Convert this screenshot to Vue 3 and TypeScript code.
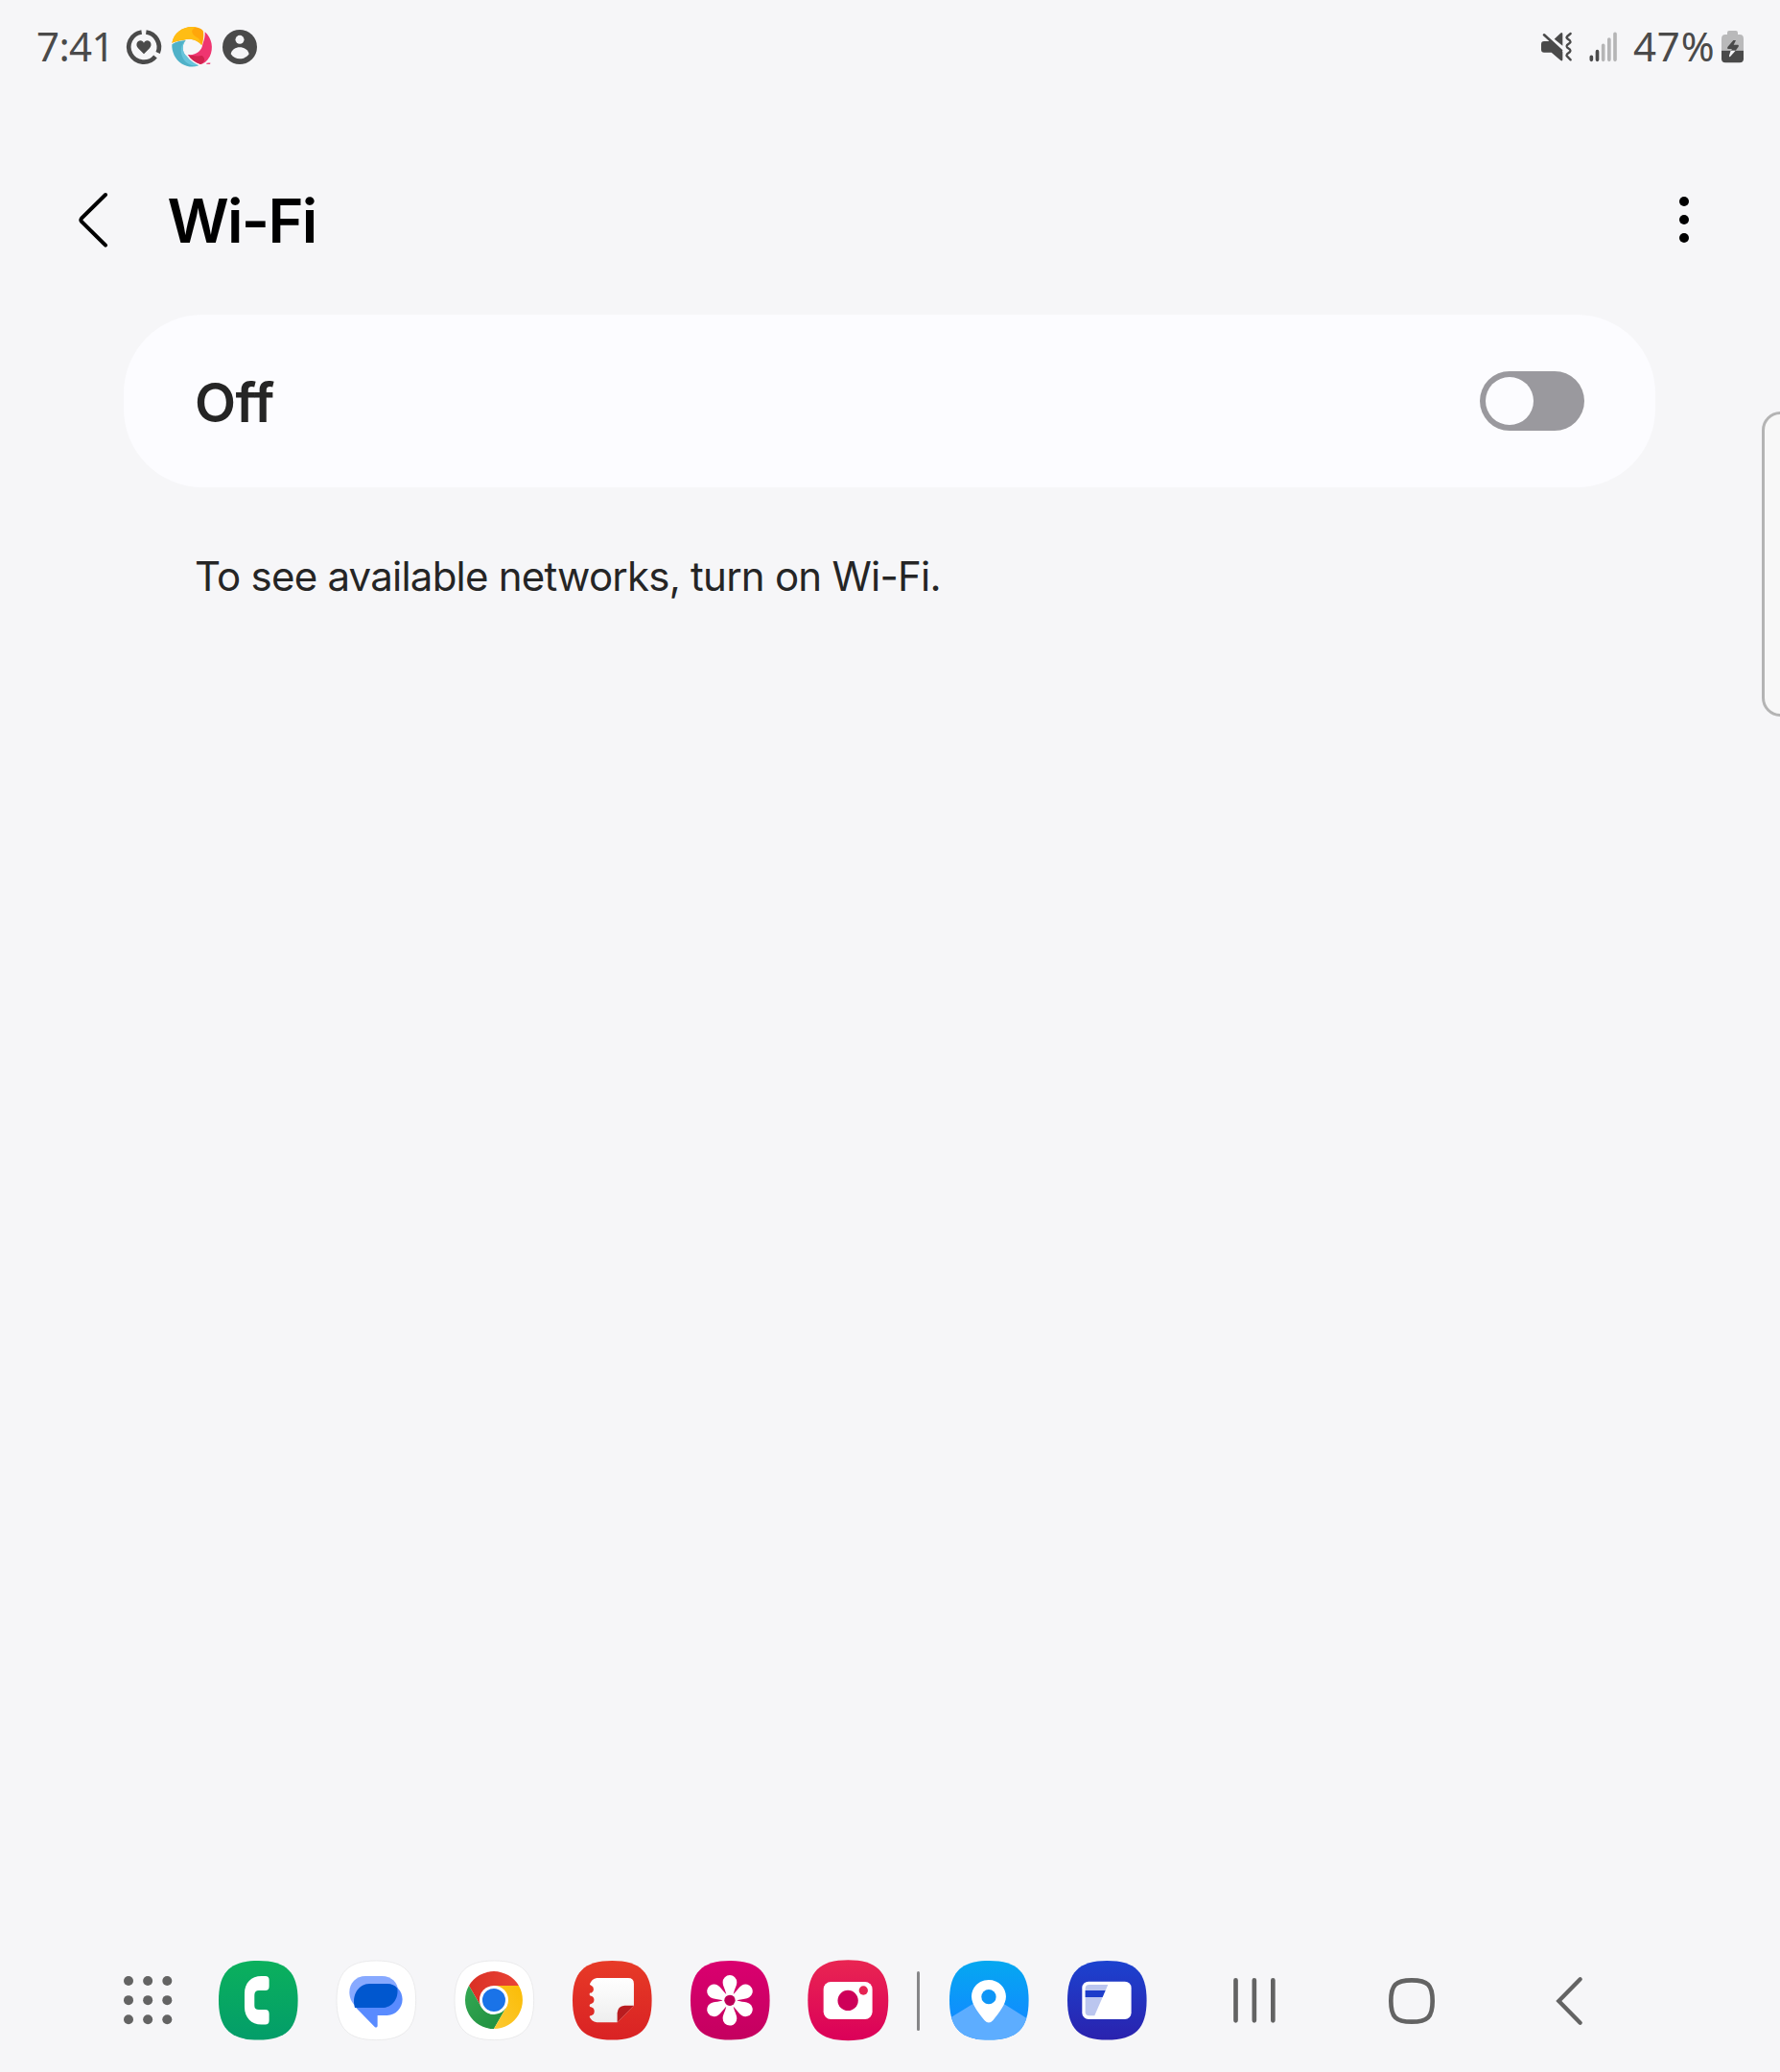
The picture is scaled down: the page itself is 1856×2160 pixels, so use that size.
<script setup lang="ts">
import { ref } from 'vue'

const time = ref('7:41')
const battery = ref('47%')
const enabled = ref(false)
const squircle = 'M124 0C212 0 248 36 248 124S212 248 124 248S0 212 0 124S36 0 124 0Z'
const grid = [15, 75.5, 136]
const petals = [0, 60, 120, 180, 240, 300]
</script>

<template>
  <div class="screen">
    <header class="status">
      <span class="clock">{{ time }}</span>
      <svg class="s-heart" viewBox="0 0 108 108" width="36" height="36">
        <g fill="none" stroke="#4a4a4a" stroke-width="14">
          <path d="M61 7.500A47 47 0 0 1 98 72" />
          <path d="M90 84A47 47 0 1 1 47 7.500" />
        </g>
        <path fill="#4a4a4a" d="M54 76L36 58C26 47 34 34 43 34C49 34 52 38 54 41C56 38 59 34 65 34C74 34 82 47 72 58Z" />
      </svg>
      <svg class="s-logo" viewBox="0 0 126 126" width="42" height="42">
        <path fill="#ffa60a" d="M1 50C8 15 40-4 75 1C88 3 97 9 99 14C101 31 99 45 94 58C82 41 58 34 37 41C22 43 10 45 1 50Z" />
        <path fill="#ffbd14" d="M1 50C8 15 40-4 75 1C56 12 62 24 84 36C88 42 92 49 94 58C82 41 58 34 37 41C22 43 10 45 1 50Z" />
        <path fill="#ef3570" d="M104 16C126 35 132 68 119 93C111 108 100 116 90 117C73 111 59 101 51 87C75 90 95 75 97 54C102 41 105 29 104 16Z" />
        <path fill="#d1224f" d="M51 87C70 92 84 92 95 90C106 98 105 112 90 117C73 111 59 101 51 87Z" />
        <path fill="#4fb1c8" d="M1 55C12 47 27 43 44 42C31 56 32 79 47 92C58 106 70 114 84 121C55 132 22 117 8 89C3 78 0 66 1 55Z" />
        <path fill="#68c5dc" d="M44 42C31 56 32 79 47 92C58 106 70 114 84 121C60 125 38 112 31 87C27 69 31 53 44 42Z" />
        <path stroke="#ef3570" stroke-width="3" d="M109 115h5M115 117v-4l2 2 2-2v4" fill="none" />
      </svg>
      <svg class="s-user" viewBox="0 0 108 108" width="36" height="36">
        <circle cx="54" cy="54" r="54" fill="#4a4a4a" />
        <circle cx="54" cy="31" r="13.5" fill="#f6f6f8" />
        <path fill="#f6f6f8" d="M26 76C29 62 41 55 54 55S80 62 83 76C76 86 65 91 54 91S33 86 26 76Z" />
      </svg>
      <span class="grow"></span>
      <svg class="s-mute" viewBox="0 0 96 90" width="32" height="30">
        <g fill="#4a4a4a">
          <path d="M9 27H27L67 60V84Q67 91 61 87L32 62H9Q0 62 0 53V37Q0 27 9 27Z" />
          <path d="M41 20L60 2Q67-3 67 5V41Z" />
        </g>
        <g fill="none" stroke="#4a4a4a" stroke-width="8" stroke-linecap="round" stroke-linejoin="round">
          <path d="M9 7L63 56" />
          <path stroke-width="7" d="M92 3L81 12Q78 15 81 18L90 25Q93 29 90 32L81 39Q78 43 81 46L90 53Q93 57 90 60L81 67Q78 71 81 74L92 85" />
        </g>
      </svg>
      <svg class="s-signal" viewBox="0 0 90 96" width="30" height="32">
        <g stroke-width="11" stroke-linecap="round">
          <path stroke="#4a4a4a" d="M7 79V88M25.500 62V88" />
          <path stroke="#b5b5b6" d="M44 43V88M62.500 24V88M81 7V88" />
        </g>
      </svg>
      <span class="percent">{{ battery }}</span>
      <svg class="s-battery" viewBox="0 0 69 100" width="23" height="33.300">
        <path fill="#b9b9ba" d="M18 12V6Q18 0 24 0H45Q51 0 51 6V12H57Q69 12 69 25V62H0V25Q0 12 12 12Z" />
        <path fill="#4a4a4a" d="M0 62H69V88Q69 100 57 100H12Q0 100 0 88Z" />
        <path fill="#4a4a4a" d="M37 30H45L38 44H52Q55 46 53 50L44 62H29L33 57H20Q17 55 19 51Z" />
        <path fill="#f6f6f8" d="M29 62H44L28 80Q24 84 24 78Z" />
      </svg>
    </header>

    <nav class="toolbar">
      <svg class="back" viewBox="0 0 90 170" width="30" height="56.700">
        <path d="M84 6L9 80Q5 85 9 90L84 164" fill="none" stroke="#000" stroke-width="12" stroke-linecap="round" />
      </svg>
      <h1>Wi-Fi</h1>
      <span class="grow"></span>
      <div class="more"><i></i><i></i><i></i></div>
    </nav>

    <main>
      <section class="card" @click="enabled = !enabled">
        <span class="state">{{ enabled ? 'On' : 'Off' }}</span>
        <span class="toggle" :class="{ on: enabled }"><i></i></span>
      </section>
      <p class="hint">To see available networks, turn on Wi-Fi.</p>
    </main>

    <div class="edge"></div>

    <footer class="dock">
      <svg class="apps" viewBox="0 0 151 151" width="50.300" height="50.300">
        <template v-for="y in grid" :key="y">
          <circle v-for="x in grid" :key="x" :cx="x" :cy="y" r="15" fill="#636363" />
        </template>
      </svg>

      <div class="pinned">
        <svg class="app" viewBox="0 0 248 248">
          <defs><linearGradient id="g1" x2="0" y2="1"><stop stop-color="#0bb05d" /><stop offset="1" stop-color="#039d69" /></linearGradient></defs>
          <path :d="squircle" fill="url(#g1)" />
          <path fill="#fff" d="M134 48H146Q158 48 158 60V80Q158 93 146 93H126Q112 93 112 108V140Q112 153 126 153H146Q158 153 158 166V187Q158 200 146 200H134C102 200 81 178 81 145V103C81 69 102 48 134 48Z" />
        </svg>
        <svg class="app" viewBox="0 0 248 248">
          <path :d="squircle" fill="#fff" stroke="#e2e2e4" stroke-width="2" />
          <path fill="#87a9ff" d="M90 48H142C172 48 192 70 192 92L60 142C47 132 40 115 40 98C40 70 62 48 90 48Z" />
          <path fill="#598bff" d="M104 72H158C186 72 206 95 206 121S186 171 158 171H128V205Q126 211 120 208L62 149C42 112 70 72 104 72Z" />
          <path fill="#0057cf" d="M104 72H158Q178 72 190 86C195 118 174 147 142 147H57C46 108 68 72 104 72Z" />
        </svg>
        <svg class="app" viewBox="0 0 248 248">
          <defs>
            <linearGradient id="cr" x2="1" y2="0"><stop stop-color="#d93025" /><stop offset="1" stop-color="#ea4335" /></linearGradient>
            <linearGradient id="cg" x2="1" y2="1"><stop stop-color="#34a853" /><stop offset="1" stop-color="#1e8e3e" /></linearGradient>
            <linearGradient id="cy" x1="1" x2="0" y2="1"><stop stop-color="#fbbc04" /><stop offset="1" stop-color="#fcc934" /></linearGradient>
          </defs>
          <path :d="squircle" fill="#fff" stroke="#e2e2e4" stroke-width="2" />
          <path fill="url(#cr)" d="M45 78A90.500 90.500 0 0 1 201 78H123L84 146Z" />
          <path fill="url(#cg)" d="M45 78L84 146Q100 168 123 168L162 146L123 213.500A90.500 90.500 0 0 1 45 78Z" />
          <path fill="url(#cy)" d="M201 78A90.500 90.500 0 0 1 123 213.500L162 146Q178 105 123 78Z" />
          <circle cx="123" cy="123" r="45" fill="#fff" />
          <circle cx="123" cy="123" r="36" fill="#1a73e8" />
        </svg>
        <svg class="app" viewBox="0 0 248 248">
          <defs>
            <linearGradient id="g4" x2="0" y2="1"><stop stop-color="#e73a27" /><stop offset="1" stop-color="#d92224" /></linearGradient>
            <linearGradient id="n4" x2="0" y2="1"><stop stop-color="#fff" /><stop offset="1" stop-color="#eee" /></linearGradient>
          </defs>
          <path :d="squircle" fill="url(#g4)" />
          <path fill="url(#n4)" d="M76 54H174Q192 54 192 72V140L140 193H76Q58 190 53 175Q53 172 58 172A14 14 0 0 0 58 145Q53 145 53 140T58 135A13 13 0 0 0 58 110Q53 110 53 105T58 101A13 13 0 0 0 58 77Q53 76 54 73Q60 57 76 54Z" />
          <path fill="#b91c1f" d="M192 140L140 193V164Q141 142 163 140Z" />
        </svg>
        <svg class="app" viewBox="0 0 248 248">
          <defs><linearGradient id="g5" x2="0" y2="1"><stop stop-color="#da006f" /><stop offset="1" stop-color="#c4005f" /></linearGradient></defs>
          <path :d="squircle" fill="url(#g5)" />
          <g fill="#fff">
            <path v-for="a in petals" :key="a" :transform="`rotate(${a} 123 124)`" d="M118 124L110 98C106 84 101 78 101 67A22 22 0 0 1 145 67C145 78 140 84 136 98L128 124Z" />
          </g>
          <circle cx="123" cy="124" r="23" fill="#fff" />
          <circle cx="123" cy="124" r="17" fill="#bd0058" />
        </svg>
        <svg class="app" viewBox="0 0 248 248">
          <defs><linearGradient id="g6" x2="0" y2="1"><stop stop-color="#e92552" /><stop offset="1" stop-color="#db0059" /></linearGradient></defs>
          <path :d="squircle" fill="url(#g6)" transform="translate(-2 -2) scale(1.016)" />
          <rect x="47" y="66" width="153" height="117" rx="23" fill="#fff" />
          <circle cx="123.500" cy="124.500" r="32" fill="#ce0059" />
          <circle cx="172" cy="93" r="14" fill="#e62453" />
        </svg>
      </div>

      <span class="divider"></span>

      <div class="pinned recent">
        <svg class="app" viewBox="0 0 248 248">
          <defs>
            <linearGradient id="g7" x2="0" y2="1"><stop stop-color="#05a8f0" /><stop offset=".75" stop-color="#108cff" /></linearGradient>
            <clipPath id="c7"><path :d="squircle" /></clipPath>
          </defs>
          <path :d="squircle" fill="url(#g7)" />
          <path clip-path="url(#c7)" fill="#5dadff" d="M0 180L123 105L248 184V248H0Z" />
          <path fill="#fff" d="M123 60C154 60 177 84 177 112C177 137 155 163 136 187Q123 201 110 187C91 163 69 137 69 112C69 84 92 60 123 60Z" />
          <circle cx="123" cy="113" r="23" fill="#0e96f7" />
        </svg>
        <svg class="app" viewBox="0 0 248 248">
          <defs><linearGradient id="g8" x2="0" y2="1"><stop stop-color="#1c42cf" /><stop offset="1" stop-color="#2a22ae" /></linearGradient></defs>
          <path :d="squircle" fill="url(#g8)" />
          <rect x="46" y="65" width="154" height="118" rx="20" fill="#fff" />
          <path fill="#bbc6ef" d="M68 75H127L85 172H68Q56 172 56 160V87Q56 75 68 75Z" />
          <path fill="#1d3dca" d="M56 93H119L110 114H56Z" />
        </svg>
      </div>

      <div class="keys">
        <svg class="k-recents" viewBox="0 0 132 140" width="44" height="46.700">
          <path d="M7.500 7V133M65.500 7V133M124 7V133" stroke="#636363" stroke-width="14" stroke-linecap="round" />
        </svg>
        <svg class="k-home" viewBox="0 0 144 144" width="48" height="48">
          <path d="M72 7C122 7 137 22 137 72S122 137 72 137S7 122 7 72S22 7 72 7Z" fill="none" stroke="#636363" stroke-width="14" />
        </svg>
        <svg class="k-back" viewBox="0 0 84 150" width="28" height="50">
          <path d="M77 7L10 75L77 143" fill="none" stroke="#636363" stroke-width="13" stroke-linecap="round" />
        </svg>
      </div>
    </footer>
  </div>
</template>

<style>
body { background: #f6f6f8; }
</style>

<style scoped>
.screen {
  position: relative;
  display: flex;
  flex-direction: column;
  width: 1856px;
  height: 2160px;
  overflow: hidden;
  background: #f6f6f8;
  color: #252525;
  font-family: Roboto, "Noto Sans", sans-serif;
}
svg { display: block; flex: none; overflow: visible; }
.grow { flex: 1; }
.status {
  display: flex;
  align-items: center;
  box-sizing: border-box;
  height: 98px;
  padding: 0 38px 0 38px;
  color: #4a4a4a;
  font-size: 42px;
  line-height: 96px;
  white-space: nowrap;
}
.clock {
  width: 94px;
  height: 98px;
  font-family: "Noto Sans", sans-serif;
  letter-spacing: -.6px;
}
.s-logo { margin-left: 11px; }
.s-user { margin-left: 11px; }
.s-mute { margin-right: 18px; margin-top: -1px; }
.s-signal { margin-right: 16px; margin-top: -1px; }
.percent {
  width: 92px;
  height: 98px;
  font-family: "Noto Sans", sans-serif;
  letter-spacing: .8px;
}
.toolbar {
  display: flex;
  align-items: center;
  box-sizing: border-box;
  height: 230px;
  padding: 0 95px 0 82px;
}
.toolbar .back { margin-top: 32px; }
h1 {
  margin: 34px 0 0 62.500px;
  color: #000;
  font-family: Inter, sans-serif;
  font-size: 63px;
  font-weight: 600;
  line-height: 76px;
  letter-spacing: -1.700px;
}
.more { display: flex; flex-direction: column; gap: 9.300px; margin-top: 32px; }
.more i { width: 10px; height: 10px; border-radius: 50%; background: #000; }
main { flex: 1; padding: 0 130px 0 129px; }
.card {
  display: flex;
  align-items: center;
  justify-content: space-between;
  box-sizing: border-box;
  height: 180px;
  padding: 0 74px 0 74px;
  border-radius: 82px;
  background: #fcfcff;
}
.state {
  margin-top: 3px;
  font-family: Inter, sans-serif;
  font-size: 56px;
  font-weight: 600;
  font-feature-settings: "calt" 0, "liga" 0;
  letter-spacing: -.5px;
}
.toggle {
  display: flex;
  box-sizing: border-box;
  width: 109px;
  height: 62px;
  padding: 6px;
  border-radius: 31px;
  background: #9a999e;
}
.toggle.on { justify-content: flex-end; background: #387aff; }
.toggle i { width: 50px; height: 50px; border-radius: 50%; background: #fcfcff; }
.hint {
  margin: 68px 0 0 74px;
  font-family: Inter, sans-serif;
  font-size: 42px;
  line-height: 50px;
  letter-spacing: -.77px;
  white-space: nowrap;
}
.edge {
  position: absolute;
  top: 429px;
  right: -20px;
  box-sizing: border-box;
  width: 39px;
  height: 318px;
  border: 3px solid #b4b4b4;
  border-radius: 20px;
  background: #f8f8f8;
}
.dock {
  display: flex;
  align-items: center;
  box-sizing: border-box;
  height: 150px;
  padding: 1px 0 0 128.700px;
}
.app { width: 82.600px; height: 82.600px; }
.pinned { display: flex; gap: 40.400px; margin-left: 49.300px; }
.divider { width: 2.700px; height: 62px; margin-left: 30.600px; border-radius: 2px; background: #868688; }
.recent { margin-left: 30.500px; }
.keys { display: flex; align-items: center; margin-left: 91.300px; }
.k-home { margin-left: 118px; }
.k-back { margin-left: 126px; }
</style>
